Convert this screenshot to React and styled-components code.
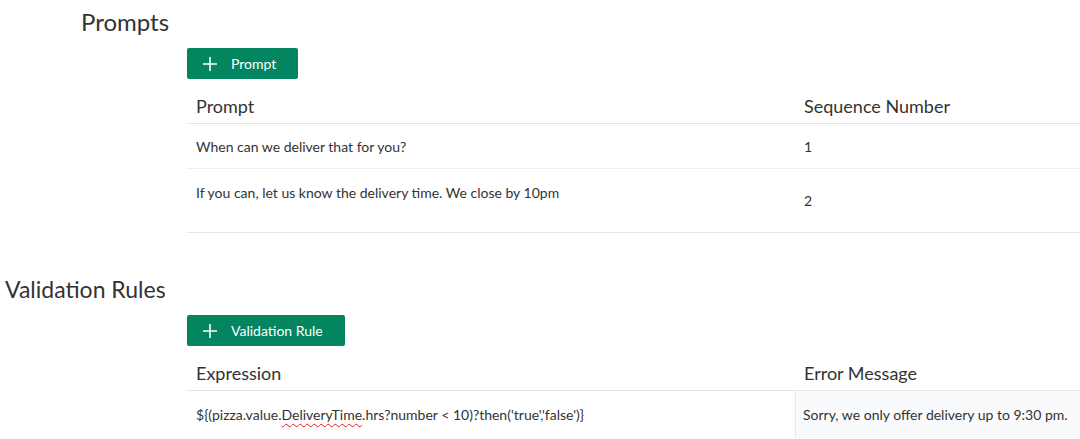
import React from "react";
import styled, { createGlobalStyle } from "styled-components";

const GlobalStyle = createGlobalStyle`
  html, body {
    margin: 0;
    padding: 0;
    background: #ffffff;
  }
  body {
    font-family: Lato, "Open Sans", "Liberation Sans", sans-serif;
    color: #333333;
    overflow: hidden;
  }
`;

const PlusIcon = () => (
  <svg width="16" height="16" viewBox="0 0 16 16" aria-hidden="true">
    <path d="M8 1v14M1 8h14" stroke="#ffffff" strokeWidth="1.6" fill="none" />
  </svg>
);

const App = () => {
  return (
    <Page>
      <GlobalStyle />
      <Section>
        <Heading indent={81}>Prompts</Heading>
        <Content>
          <AddButton>
            <PlusIcon />
            <span>Prompt</span>
          </AddButton>
          <Table>
            <HeaderCell>Prompt</HeaderCell>
            <HeaderCell>Sequence Number</HeaderCell>

            <Cell height={44}>When can we deliver that for you?</Cell>
            <Cell height={44}>1</Cell>

            <Cell height={64} top>
              If you can, let us know the delivery time. We close by 10pm
            </Cell>
            <Cell height={64}>2</Cell>
          </Table>
        </Content>
      </Section>

      <Section spaced>
        <Heading indent={5} size={23}>Validation Rules</Heading>
        <Content>
          <AddButton>
            <PlusIcon />
            <span>Validation Rule</span>
          </AddButton>
          <Table open>
            <HeaderCell>Expression</HeaderCell>
            <HeaderCell>Error Message</HeaderCell>

            <Cell height={47}>
              <span>
                ${"{"}(pizza.value.<Misspelt>DeliveryTime</Misspelt>.hrs?number &lt; 10)?then('true','false')
                {"}"}
              </span>
            </Cell>
            <Cell height={47} shaded>
              Sorry, we only offer delivery up to 9:30 pm.
            </Cell>
          </Table>
        </Content>
      </Section>
    </Page>
  );
};

const Page = styled.div`
  width: 1080px;
  height: 439px;
  overflow: hidden;
`;

const Section = styled.section`
  margin-top: ${({ spaced }) => (spaced ? "34px" : "0")};
`;

const Heading = styled.h2`
  margin: 0;
  padding: 7px 0 0 ${({ indent }) => indent}px;
  height: 48px;
  box-sizing: border-box;
  font-size: ${({ size }) => size || 24}px;
  font-weight: 400;
  line-height: 30px;
  color: #333333;
`;

const Content = styled.div`
  margin-left: 187px;
`;

const AddButton = styled.button`
  display: inline-flex;
  align-items: center;
  gap: 13px;
  height: 31px;
  padding: 0 22px 0 15px;
  border: none;
  border-radius: 2px;
  background: #038660;
  color: #ffffff;
  font-family: inherit;
  font-size: 14px;
  cursor: pointer;
`;

const Table = styled.div`
  display: grid;
  grid-template-columns: 608px 1fr;
  border-bottom: ${({ open }) => (open ? "none" : "1px solid #e3e4e6")};
`;

const HeaderCell = styled.div`
  display: flex;
  align-items: center;
  height: 45px;
  box-sizing: border-box;
  padding: 9px 9px 0;
  border-bottom: 1px solid #e3e4e6;
  font-size: 18px;
  color: #333333;
`;

const Cell = styled.div`
  display: flex;
  align-items: ${({ top }) => (top ? "flex-start" : "center")};
  height: ${({ height }) => height}px;
  box-sizing: border-box;
  padding: ${({ top }) => (top ? "15px 9px 0" : "0 9px")};
  border-top: 1px solid #eceef0;
  font-size: 14px;
  color: #333333;
  background: ${({ shaded }) => (shaded ? "#f9fafc" : "transparent")};
  border-left: ${({ shaded }) => (shaded ? "1px solid #e4e6e8" : "none")};
  padding-left: ${({ shaded }) => (shaded ? "7px" : "9px")};

  &:nth-child(3), &:nth-child(4) {
    border-top: none;
  }
`;

const Misspelt = styled.span`
  text-decoration: underline wavy #e02020;
  text-decoration-thickness: 1px;
  text-underline-offset: 3px;
  text-decoration-skip-ink: none;
`;

export default App;
